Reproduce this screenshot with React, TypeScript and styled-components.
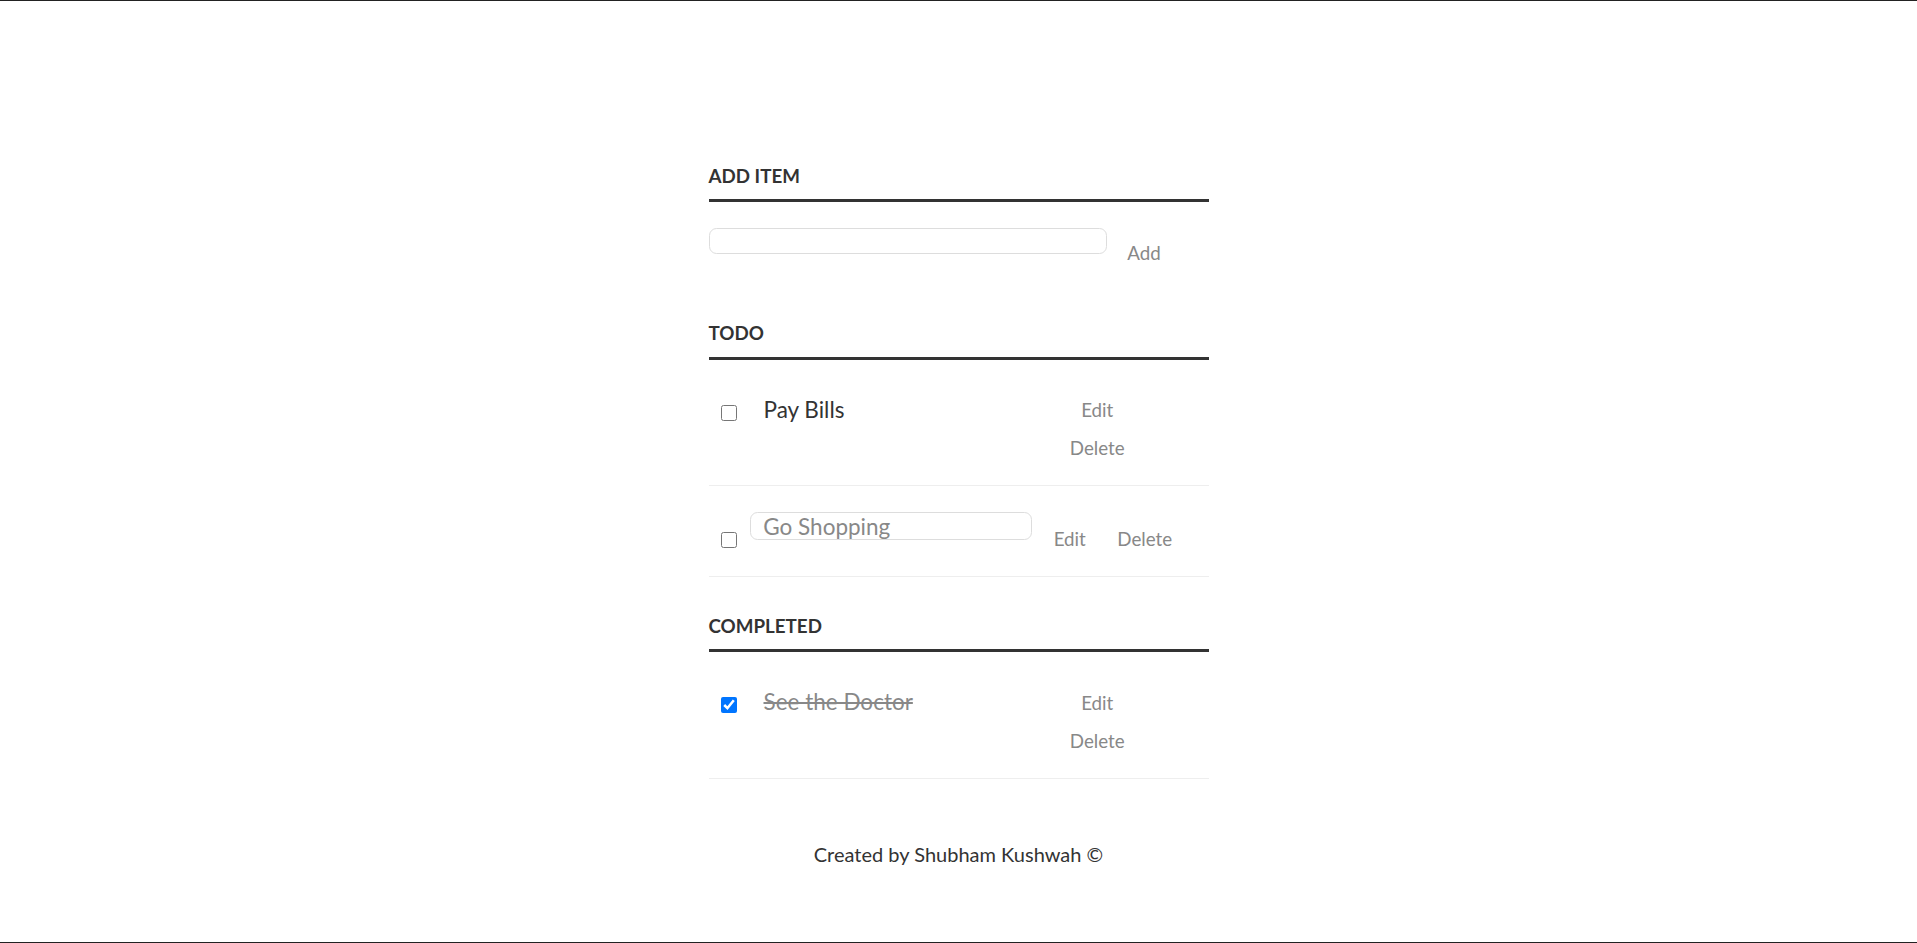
import styled, { createGlobalStyle } from "styled-components";

type Task = {
  id: number;
  text: string;
  done: boolean;
  editing?: boolean;
};

const todo: Task[] = [
  { id: 1, text: "Pay Bills", done: false },
  { id: 2, text: "Go Shopping", done: false, editing: true },
];

const completed: Task[] = [{ id: 3, text: "See the Doctor", done: true }];

const GlobalStyle = createGlobalStyle`
  html, body {
    margin: 0;
    padding: 0;
  }

  body {
    font-family: Lato, "Open Sans", "Liberation Sans", sans-serif;
    color: #333;
    background: #fff;
  }
`;

function TaskRow({ task }: { task: Task }) {
  return (
    <Row $editing={!!task.editing}>
      <Check type="checkbox" defaultChecked={task.done} />
      {task.editing ? (
        <EditInput type="text" defaultValue={task.text} />
      ) : (
        <TaskLabel $done={task.done}>{task.text}</TaskLabel>
      )}
      <Actions $stacked={!task.editing}>
        <ActionButton>Edit</ActionButton>
        <ActionButton>Delete</ActionButton>
      </Actions>
    </Row>
  );
}

export default function App() {
  return (
    <Page>
      <GlobalStyle />
      <Container>
        <Heading>Add item</Heading>
        <AddRow>
          <NewTask type="text" />
          <ActionButton>Add</ActionButton>
        </AddRow>

        <Heading>Todo</Heading>
        <List>
          {todo.map((task) => (
            <TaskRow key={task.id} task={task} />
          ))}
        </List>

        <Heading>Completed</Heading>
        <List>
          {completed.map((task) => (
            <TaskRow key={task.id} task={task} />
          ))}
        </List>
      </Container>
      <Footer>Created by Shubham Kushwah ©</Footer>
    </Page>
  );
}

const Page = styled.div`
  min-height: 100vh;
  box-sizing: border-box;
  border-top: 1px solid #222;
  border-bottom: 1px solid #222;
`;

const Container = styled.div`
  width: 500px;
  margin: 126px auto 0;
`;

const Heading = styled.h3`
  margin: 0;
  padding: 37.5px 0 12px;
  font-size: 18.75px;
  line-height: 22.5px;
  font-weight: 700;
  color: #333;
  text-transform: uppercase;
  border-bottom: 3px solid #333;
`;

const AddRow = styled.div`
  display: flex;
  align-items: flex-start;
  margin: 25.5px 0 19.5px;
`;

const NewTask = styled.input`
  box-sizing: border-box;
  width: 398px;
  height: 26px;
  margin: 0;
  padding: 0 12px;
  border: 1px solid #ddd;
  border-radius: 7.5px;
  background: #fff;
  font-family: inherit;
  font-size: 18px;
  color: #888;
  outline: none;
`;

const List = styled.ul`
  margin: 0;
  padding: 0;
  list-style: none;
`;

const Row = styled.li<{ $editing: boolean }>`
  display: flex;
  flex-wrap: nowrap;
  align-items: flex-start;
  padding: ${(p) => (p.$editing ? "26px 0 25.5px" : "25px 0 25.75px")};
  border-bottom: 1.25px solid #eee;
`;

const Check = styled.input`
  width: 16px;
  height: 16px;
  margin: 20px 12.5px 0 12.75px;
  flex-shrink: 0;
`;

const TaskLabel = styled.label<{ $done: boolean }>`
  box-sizing: border-box;
  width: 310px;
  padding-left: 13.75px;
  font-size: 22.5px;
  line-height: 50px;
  color: ${(p) => (p.$done ? "#888" : "#333")};
  text-decoration: ${(p) => (p.$done ? "line-through" : "none")};
`;

const EditInput = styled.input`
  box-sizing: border-box;
  width: 282.5px;
  height: 28px;
  margin: 0;
  padding: 0 12.5px;
  border: 1px solid #ddd;
  border-radius: 7.5px;
  background: #fff;
  font-family: inherit;
  font-size: 22.5px;
  line-height: 26px;
  color: #888;
  outline: none;
`;

const Actions = styled.div<{ $stacked: boolean }>`
  display: flex;
  flex-direction: ${(p) => (p.$stacked ? "column" : "row")};
  padding-top: ${(p) => (p.$stacked ? "0" : "1px")};
`;

const ActionButton = styled.button`
  box-sizing: border-box;
  width: 75px;
  height: 25px;
  margin: 12.5px 0 0;
  padding: 2px 0 0;
  border: 0;
  background: none;
  font-family: inherit;
  font-size: 18.75px;
  line-height: 22.5px;
  color: #888;
  cursor: pointer;

  &:hover {
    color: #333;
  }
`;

const Footer = styled.p`
  margin: 63.5px 0 0;
  text-align: center;
  font-size: 20px;
  line-height: 22.5px;
  color: #333;
`;
